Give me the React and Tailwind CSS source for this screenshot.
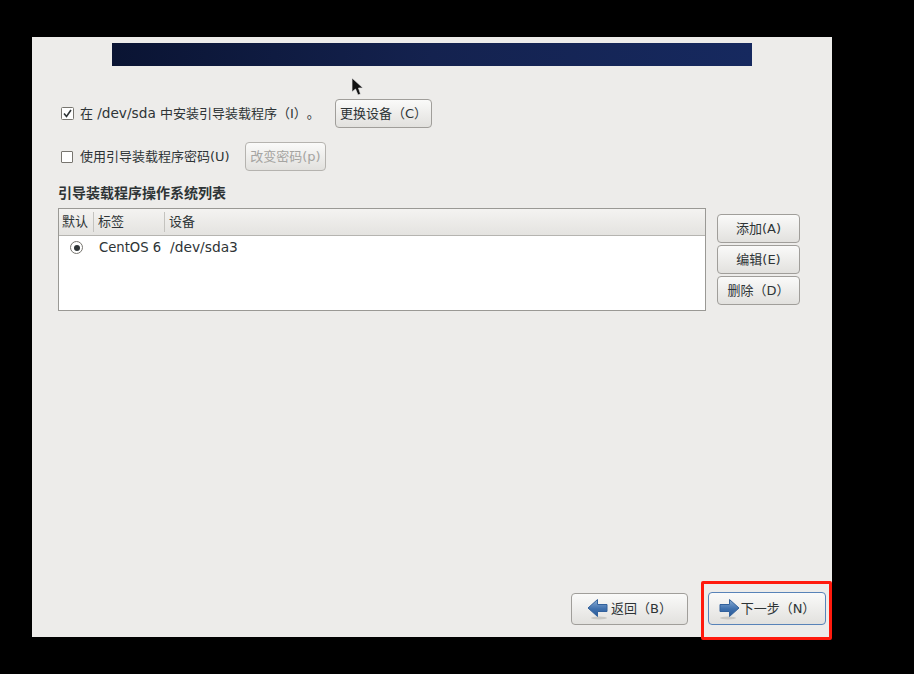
import React from "react";

const font = "[font-family:'DejaVu_Sans','Noto_Sans_CJK_SC',sans-serif] [text-spacing-trim:space-all]";

const Button = ({ children, className = "", disabled }) => {
  return (
    <div
      className={`flex items-center justify-center rounded-[4px] border text-[13px] leading-none bg-gradient-to-b from-[#fafaf9] to-[#e2e1de] ${
        disabled ? "border-[#b5b3af] text-[#a5a4a1] from-[#efeeec] to-[#dfdedb]" : "border-[#a09e9a] text-[#2e3436]"
      } ${className}`}
    >
      {children}
    </div>
  );
};

const Arrow = ({ flip }) => {
  return (
    <svg width="21" height="22" viewBox="0 0 21 22" className={flip ? "-scale-x-100" : ""}>
      <defs>
        <linearGradient id={flip ? "arrowBack" : "arrowNext"} x1="0" y1="0" x2="0" y2="1">
          <stop offset="0" stopColor="#8aaed6" />
          <stop offset="0.55" stopColor="#3f70ad" />
          <stop offset="1" stopColor="#2a5a97" />
        </linearGradient>
      </defs>
      <ellipse cx="9" cy="20" rx="8" ry="1.5" fill="#c9c8c4" />
      <path
        d="M1 6.5 H10.5 V1.5 L20 10 L10.5 18.5 V13.5 H1 Z"
        fill={`url(#${flip ? "arrowBack" : "arrowNext"})`}
        stroke="#32619c"
        strokeWidth="1"
      />
    </svg>
  );
};

const App = () => {
  return (
    <div className={`relative w-[914px] h-[674px] overflow-hidden bg-black pt-[37px] pl-[32px] ${font}`}>
      <div className="flex flex-col w-[800px] h-[600px] bg-[#edecea]">
        <div className="mt-[6px] ml-[80px] w-[640px] h-[23px] shrink-0 bg-gradient-to-r from-[#0a1433] via-[#14224f] to-[#16295f]" />

        <div className="flex items-center mt-[33px] ml-[29px] h-[29px]">
          <svg width="13" height="13" viewBox="0 0 13 13" className="shrink-0">
            <rect x="0.5" y="0.5" width="12" height="12" rx="1" fill="#fff" stroke="#77756f" />
            <path d="M3 6.5 L5.5 9.5 L10 3" fill="none" stroke="#2e3436" strokeWidth="1.6" />
          </svg>
          <span className="ml-[6px] w-[255px] pb-[1px] text-[13px] text-[#2e3436] whitespace-nowrap">
            在 <span className="text-[13.7px]">/dev/sda</span> 中安装引导装载程序（I）。
          </span>
          <Button className="w-[97px] h-[29px] whitespace-nowrap">更换设备（C）</Button>
        </div>

        <div className="flex items-center mt-[14px] ml-[29px] h-[29px]">
          <div className="w-[12px] h-[12px] shrink-0 rounded-[1px] border border-[#77756f] bg-white" />
          <span className="ml-[7px] w-[165px] text-[13px] text-[#2e3436] whitespace-nowrap">使用引导装载程序密码(U)</span>
          <Button disabled className="w-[81px] h-[29px] whitespace-nowrap">改变密码(p)</Button>
        </div>

        <div className="mt-[14px] ml-[26px] h-[16px] text-[14px] leading-[16px] font-bold text-[#2e3436] whitespace-nowrap">引导装载程序操作系统列表</div>

        <div className="flex items-start ml-[26px] mt-[7px]">
          <div className="w-[648px] h-[103px] border border-[#9a9995] bg-white">
            <div className="flex items-center h-[27px] border-b border-[#b5b4b0] bg-gradient-to-b from-[#f4f3f1] to-[#e4e3e0] text-[13px] text-[#2e3436]">
              <span className="w-[35px] pl-[3px] border-r border-[#c4c3bf] leading-[20px] whitespace-nowrap">默认</span>
              <span className="w-[71px] pl-[4px] border-r border-[#c4c3bf] leading-[20px]">标签</span>
              <span className="pl-[4px] leading-[20px]">设备</span>
            </div>
            <div className="flex items-center h-[23px] text-[13.2px] text-[#2e3436]">
              <div className="flex items-center justify-center ml-[11px] w-[13px] h-[13px] rounded-full border border-[#77756f] bg-white">
                <div className="w-[6px] h-[6px] rounded-full bg-[#2e3436]" />
              </div>
              <span className="ml-[16px] w-[71px] whitespace-nowrap">CentOS 6</span>
              <span className="text-[13.8px]">/dev/sda3</span>
            </div>
          </div>

          <div className="flex flex-col gap-[2px] ml-[11px] mt-[6px] w-[83px]">
            <Button className="h-[29px]">添加(A)</Button>
            <Button className="h-[29px]">编辑(E)</Button>
            <Button className="h-[29px] whitespace-nowrap">删除（D）</Button>
          </div>
        </div>

        <div className="flex items-center mt-auto mb-[12px] ml-[539px]">
          <Button className="w-[117px] h-[32px] gap-[3px]">
            <Arrow flip />
            <span className="whitespace-nowrap">返回（B）</span>
          </Button>
          <Button className="ml-[20px] w-[118px] h-[33px] gap-[1px] !border-[#5883b8] from-[#f7f8fa] to-[#d9dfe8]">
            <Arrow />
            <span className="whitespace-nowrap">下一步（N）</span>
          </Button>
        </div>
      </div>

      {/* red annotation round the next button */}
      <div className="absolute left-[701px] top-[581px] w-[131px] h-[59px] rounded-[2px] border-[3px] border-[#ff1a0d]" />

      {/* mouse pointer */}
      <svg width="13" height="19" viewBox="0 0 13 19" className="absolute left-[351px] top-[77px]">
        <path d="M1 1 V15 L4.5 12 L7 18 L9.5 17 L7.5 11 H12 Z" fill="#111" stroke="#e8e8e8" strokeWidth="0.7" />
      </svg>
    </div>
  );
};

export default App;
